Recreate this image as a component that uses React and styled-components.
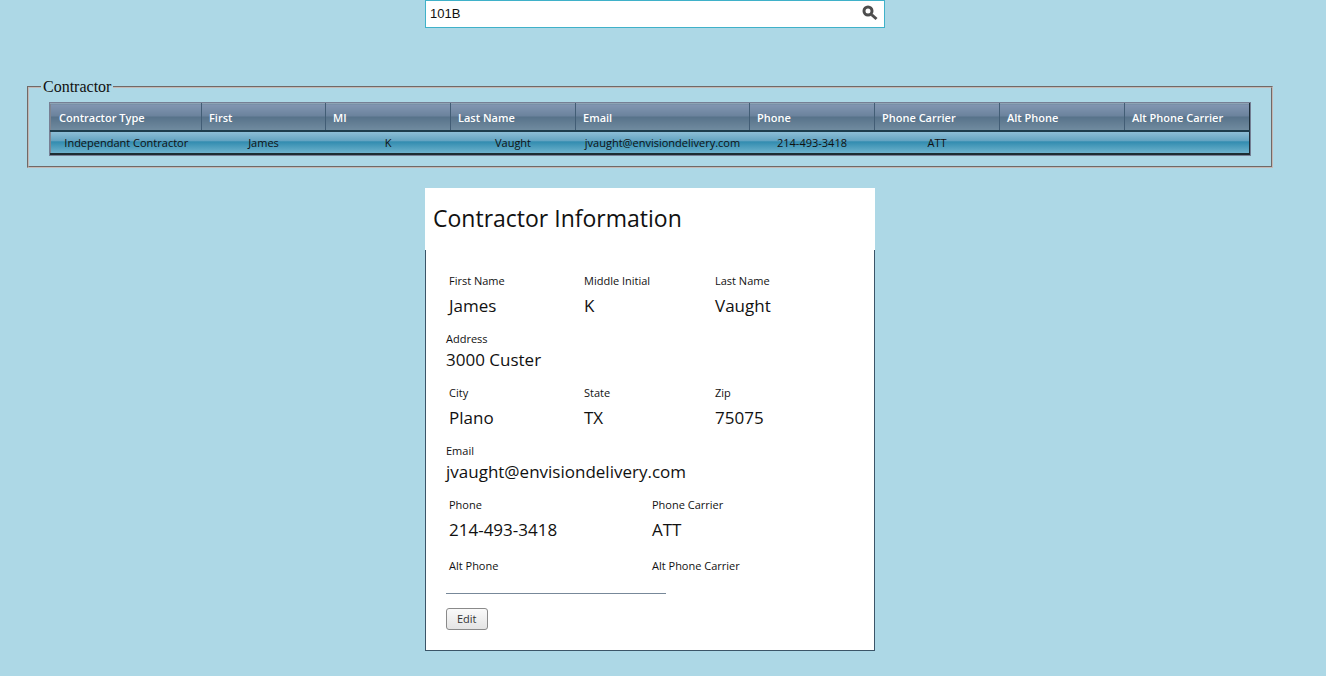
import styled, { createGlobalStyle } from "styled-components";

const GlobalStyle = createGlobalStyle`
  * {
    box-sizing: border-box;
  }
  body {
    margin: 0;
    background-color: lightblue;
    color: #111;
    font-family: "Open Sans", "Noto Sans", sans-serif;
  }
`;

const Page = styled.main`
  padding: 0 53px 24px 27px;
`;

const Column = styled.div`
  width: 450px;
  max-width: 100%;
  margin: 0 auto;
`;

const Search = styled.form`
  display: flex;
  align-items: center;
  width: calc(100% + 10px);
  height: 28px;
  padding: 0 5px 2px 4px;
  background-color: white;
  border: 1px solid #3fb1c9;
`;

const SearchInput = styled.input`
  flex: 1;
  min-width: 0;
  padding: 0;
  border: none;
  outline: none;
  color: #111;
  font-family: "Liberation Sans", Arial, sans-serif;
  font-size: 13px;
`;

const SearchButton = styled.button`
  display: flex;
  padding: 0 1px 0 2px;
  border: none;
  background: none;
  cursor: pointer;
`;

const Fieldset = styled.fieldset`
  margin: 50px 0 20px;
  padding: 6px 20px 10px 20px;
  border: 2px groove #c4b8b4;
  min-width: 0;
`;

const Legend = styled.legend`
  margin-left: -8px;
  padding: 0 2px;
  font-family: "Liberation Serif", "Times New Roman", serif;
  font-size: 16px;
  line-height: 18px;
`;

const GridFrame = styled.div`
  border: 1px solid #767f94;
`;

const Grid = styled.table`
  width: 100%;
  table-layout: fixed;
  border-collapse: collapse;
  border: 1px solid #1d2d38;
  border-top-color: #8ea3b4;
  border-left-color: #7f8590;
  border-bottom: 2px solid #1d2d32;
`;

const HeadCell = styled.th`
  height: 27px;
  padding: 2px 7px 0;
  border-left: 1px solid #425d75;
  border-bottom: 2px solid #1d3c4c;
  background: linear-gradient(#8296b2, #6a829c 45%, #567189 46%, #718ca0);
  color: white;
  font-size: 11px;
  font-weight: 600;
  line-height: 16px;
  text-align: left;
  white-space: nowrap;

  &:first-child {
    padding-left: 8px;
    border-left: none;
  }
`;

const BodyRow = styled.tr`
  background: linear-gradient(#92c1d9, #61a2c0 45%, #318baf 46%, #73b6cf);
`;

const Cell = styled.td`
  height: 23px;
  padding: 2px 0 0;
  font-size: 11px;
  line-height: 16px;
  text-align: center;
  white-space: nowrap;
`;

const CardTitle = styled.h1`
  margin: 0;
  padding: 14px 8px 16px;
  background-color: white;
  font-size: 23px;
  font-weight: 400;
  line-height: 32px;
`;

const CardBody = styled.div`
  padding: 21px 20px 20px;
  background-color: white;
  border: 1px solid #3b5568;
  border-top: none;
`;

const Fields = styled.dl`
  display: grid;
  grid-template-columns: ${(props) => props.$columns};
  margin: 0 0 ${(props) => (props.$loose ? "11px" : "8px")};
  padding-left: 3px;
`;

const WideField = styled.dl`
  margin: 0 0 12px;
`;

const Label = styled.dt`
  font-size: 11px;
  line-height: 20px;
`;

const Value = styled.dd`
  margin: 0;
  font-size: 17px;
  line-height: ${(props) => (props.$tight ? "22px" : "30px")};
`;

const Divider = styled.hr`
  width: 220px;
  margin: 17px 0 14px;
  border: none;
  border-top: 1px solid #778899;
`;

const EditButton = styled.button`
  display: block;
  height: 22px;
  padding: 0 10px;
  border: 1px solid #8a8a8a;
  border-radius: 3px;
  background: linear-gradient(#fafafa, #e4e4e4);
  color: #333;
  font-family: inherit;
  font-size: 11px;
  line-height: 20px;
  cursor: pointer;
`;

const columns = [
  { title: "Contractor Type", width: 151, value: "Independant Contractor" },
  { title: "First", width: 124, value: "James" },
  { title: "MI", width: 125, value: "K" },
  { title: "Last Name", width: 125, value: "Vaught" },
  { title: "Email", width: 174, value: "jvaught@envisiondelivery.com" },
  { title: "Phone", width: 125, value: "214-493-3418" },
  { title: "Phone Carrier", width: 125, value: "ATT" },
  { title: "Alt Phone", width: 125, value: "" },
  { title: "Alt Phone Carrier", width: 125, value: "" },
];

const Col = styled.col`
  width: ${(props) => props.$width}px;
`;

const Field = ({ label, value, tight }) => (
  <div>
    <Label>{label}</Label>
    {value && <Value $tight={tight}>{value}</Value>}
  </div>
);

const SearchIcon = () => (
  <svg width="16" height="16" viewBox="0 0 16 16" fill="none" stroke="#4d4d4d">
    <circle cx="6" cy="6" r="4" strokeWidth="3" />
    <path d="M9 9l1.5 1.5" strokeWidth="2" />
    <path d="M10 10l4.5 4" strokeWidth="3" />
  </svg>
);

const App = () => {
  return (
    <Page>
      <GlobalStyle />
      <Column>
        <Search onSubmit={(e) => e.preventDefault()}>
          <SearchInput aria-label="Contractor search" defaultValue="101B" />
          <SearchButton aria-label="Search">
            <SearchIcon />
          </SearchButton>
        </Search>
      </Column>
      <Fieldset>
        <Legend>Contractor</Legend>
        <GridFrame>
          <Grid>
            <colgroup>
              {columns.map((c) => (
                <Col key={c.title} $width={c.width} />
              ))}
            </colgroup>
            <thead>
              <tr>
                {columns.map((c) => (
                  <HeadCell key={c.title}>{c.title}</HeadCell>
                ))}
              </tr>
            </thead>
            <tbody>
              <BodyRow>
                {columns.map((c) => (
                  <Cell key={c.title}>{c.value}</Cell>
                ))}
              </BodyRow>
            </tbody>
          </Grid>
        </GridFrame>
      </Fieldset>
      <Column>
        <CardTitle>Contractor Information</CardTitle>
        <CardBody>
          <Fields $columns="135px 131px 1fr">
            <Field label="First Name" value="James" />
            <Field label="Middle Initial" value="K" />
            <Field label="Last Name" value="Vaught" />
          </Fields>
          <WideField>
            <Field label="Address" value="3000 Custer" tight />
          </WideField>
          <Fields $columns="135px 131px 1fr">
            <Field label="City" value="Plano" />
            <Field label="State" value="TX" />
            <Field label="Zip" value="75075" />
          </Fields>
          <WideField>
            <Field label="Email" value="jvaught@envisiondelivery.com" tight />
          </WideField>
          <Fields $columns="203px 1fr" $loose>
            <Field label="Phone" value="214-493-3418" />
            <Field label="Phone Carrier" value="ATT" />
          </Fields>
          <Fields $columns="203px 1fr">
            <Field label="Alt Phone" />
            <Field label="Alt Phone Carrier" />
          </Fields>
          <Divider />
          <EditButton type="button">Edit</EditButton>
        </CardBody>
      </Column>
    </Page>
  );
};

export default App;
